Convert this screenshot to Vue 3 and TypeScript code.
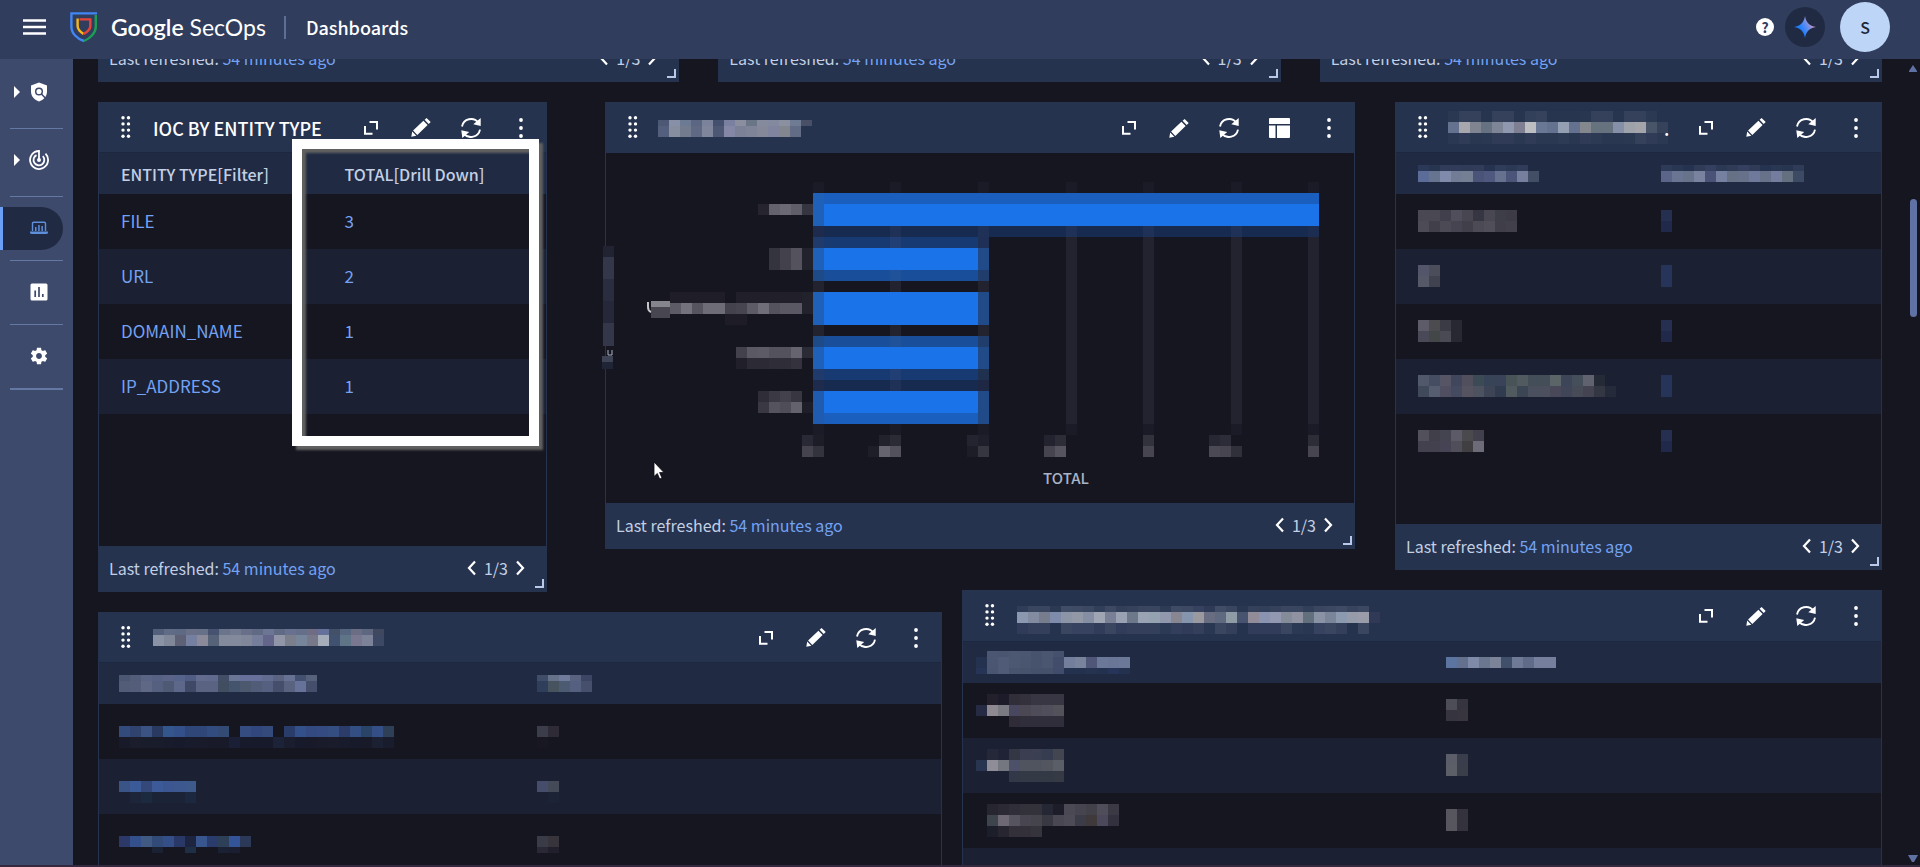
<script setup lang="ts">
import { h } from 'vue'
import type { FunctionalComponent } from 'vue'

type Band = [height: number, colours: string]
type Cell = string | Band[]

interface Column {
  head: Cell
}

interface Card {
  id: string
  label: string
  title: Cell
  trail?: string
  links?: boolean
  first: number
  columns?: Column[]
  rows?: Cell[][]
  chart?: boolean
  pager?: boolean
  spotlight?: boolean
}

const CELL = 11

/* Redacted value: bands of square colour cells, "." leaves a cell empty. */
const Mosaic: FunctionalComponent<{ bands: Band[] }> = ({ bands }) => {
  let y = 0
  let width = 0
  const rects = bands.flatMap(([height, colours]) => {
    const list = colours.split(' ')
    const top = y
    y += height
    width = Math.max(width, list.length * CELL)
    return list.map((colour, i) =>
      colour === '.' ? null : h('rect', { x: i * CELL, y: top, width: CELL, height, fill: '#' + colour }),
    )
  })
  return h('svg', { width, height: y, viewBox: `0 0 ${width} ${y}`, 'shape-rendering': 'crispEdges', 'aria-hidden': 'true' }, rects)
}
Mosaic.props = ['bands']

const valueBlue: Band[] = [[11, '252f50'], [11, '20294a']]

const cards: Card[] = [
  {
    id: 'ioc', label: 'IOC by entity type', title: 'IOC BY ENTITY TYPE', links: true, first: 50, pager: true, spotlight: true,
    columns: [{ head: 'ENTITY TYPE[Filter]' }, { head: 'TOTAL[Drill Down]' }],
    rows: [['FILE', '3'], ['URL', '2'], ['DOMAIN_NAME', '1'], ['IP_ADDRESS', '1']],
  },
  {
    id: 'chart', label: 'Bar chart', first: 50, chart: true, pager: true,
    title: [
      [6, '4c5874 8790a6 6d7a93 5b6782 7a839b 44506d 7a80a0 8a8e9f 6a7586 858b9d 83899e 8a90a0 6f7a93 484f66'],
      [11, '535f7d 878ea0 737c8f 5f6983 7f869b 4c5873 8488a6 7c8198 808498 848898 80849e 82868e 626c86 .'],
    ],
  },
  {
    id: 'third', label: 'Summary table', first: 50, pager: true, trail: '.',
    title: [
      [11, '2b3852 35415b 35415b 28354f 35415b 35415b 28354f 33405a 36425c 28354f 28354f 28354f 29364f 35415b 35415b 28354f 35415b 35415b 2c3953 .'],
      [11, '65728f a9a7ae 7f8490 667182 7d8597 8f98ae 7e7f92 bcbec2 6a7896 65728f 959fb4 65728f 85878f 67727f 67727f 8590a8 9da2ab a3a5aa 485468 364259'],
      [11, '2b3853 303c57 2a3751 2b3852 303c57 303c57 2b3852 303c57 2b3852 2b3852 2e3b55 2a3751 303c57 2d3a54 2a3751 2a3751 2b3852 35415b 303c57 2c3953'],
    ],
    columns: [
      { head: [
        [6, '2b3858 283551 303c59 303c59 2f3b57 303c59 263350 303c59 2c3955 303c59 .'],
        [11, '5c6c98 67748f 808aab 727c95 757f93 4a5478 4f587f 66718f 4b5579 777f9f 414e66'],
      ] },
      { head: [
        [6, '2d3a58 2a3753 263350 2f3b57 354060 2c3955 2f3b57 354060 2f3b57 263350 2a3753 283551 2f3b57'],
        [11, '5b658a 6a7594 66738b 79839f 4a5278 7680a0 667185 67728a 6f799c 67728a 747d9e 646f80 3d4a63'],
      ] },
    ],
    rows: [
      [[
        [11, '4a4953 4a4953 403f4b 4f4e5a 474651 363642 484752 3e3e49 3c3b46'],
        [11, '4d4b55 403f4a 4c4a55 454450 403f4a 4c4b55 504e58 403f49 42414b'],
      ], valueBlue],
      [[[11, '53566a 4b4e5a'], [11, '555866 40434f']], [[22, '26345a']]],
      [[[11, '5d5b68 4b4b50 3b3b45 282833'], [11, '4a4957 434747 4a4a55 282833']], valueBlue],
      [[
        [11, '51586b 454d63 555566 40475c 514f5e 3b4a55 374458 394258 485357 505a5f 434e59 444e59 5b6568 3d4659 454f5b 60626f 252a37 .'],
        [11, '404959 565d70 504f62 444a60 55535f 4c5260 3c4456 303b50 50595e 3c4554 4a505e 4b4f5e 484858 404558 464b57 434351 323743 252a3a'],
      ], [[22, '26345a']]],
      [[[11, '52515b 403f4a 444350 5b5a66 4a4a4e 42404c'], [11, '42414d 42414d 464354 4f4e59 423f42 6d6b77']], valueBlue],
    ],
  },
  {
    id: 'fourth', label: 'Detail table', first: 49.6,
    title: [
      [6, '52607c 606c86 5e6a83 6a7088 667088 465270 6a758c 727a92 686f88 606a84 6c7594 606a84 687190 666f8a 6f6c84 65719a 435068 566680 6a6d84 5d6880 404860'],
      [11, '8a92a6 7f8799 5e6075 757f9f 8a8a9a 566278 838a9c 838a9c 80879a 757f9b 63668a 9096a8 7b7f8c 76859a 77788a a5adbb 415270 607488 7a7890 7c8399 3d4864'],
    ],
    columns: [
      { head: [
        [6, '4b5672 525d79 5a6484 566184 5b6488 56638a 515c84 636c8e 606a8c 414e66 6a7596 66709a 66709a 626c90 5a6480 667194 445070 56617c'],
        [11, '525c76 545e7a 5f6986 556080 4e5974 5d678a 3f4966 5a6482 5a6482 414e62 44546c 4c586e 515c78 556080 454f6c 59637f 67729a 454f6c'],
      ] },
      { head: [[6, '3f4d69 66718a 707b9c 59637f 3c4664'], [11, '2f3e5b 47545f 4c5a72 556080 464f6c']] },
    ],
    rows: [
      [[
        [11, '.'],
        [11, '334a7c 30436f 3b5382 293a60 33568c 33508a 2f4678 2f4678 324c80 334a74 . 344c80 30467c 344a7c . 293c6a 33508a 324a80 344a80 354e82 2c3c68 324e82 2a4468 344f86 2e4058'],
        [11, '181a2a 1b1d2c 191c2b 191c2b 181b2b 171a2a 181b2c 191b2a 181a2a 181a2a 1a1f36 171a2a 171a2a 171a2a 1c2338 1a1d2e 171a2a 181a2a 191b2a 1a1c2c 181b2b 171a2a 181a2a 1b2032 181c2c'],
      ], [[11, '.'], [11, '3c3d4a 2f2b36'], [11, '181722 .']]],
      [[
        [11, '.'],
        [11, '3b5488 3b5a98 34497a 3c5a98 3b5690 3c588f 3e5a8c'],
        [11, '. 1c2539 1c2a40 1b2336 1b2336 1b2336 1c2840'],
      ], [[11, '.'], [11, '454d6a 454a58'], [11, '. 1c2337']]],
      [[
        [6, '.'],
        [11, '2c3868 34508c 405a84 314a78 344f88 2a3868 1c2440 38558e 2a3c6c 2e4058 34549a 2c3858'],
        [6, '. . . 1a2133 . . 1e2e44 . . 1a2133 1a1e30 .'],
      ], [[6, '.'], [11, '393b47 37343c'], [6, '2a2834 211f2c']]],
    ],
  },
  {
    id: 'fifth', label: 'Event table', first: 50,
    title: [
      [6, '303d58 3a4660 3a4660 2c3953 414d66 3f4b64 3c4862 323f59 3d4963 333f59 36425c 3a4660 3a4660 2e3b55 3f4b64 3d4963 364260 2f3b56 414d66 3a4660 2a3751 35415b 323f59 36425c 3a4660 3a4660 323f59 3a4660 3c4862 3f4b64 38445e 3c4862 .'],
      [11, '8b98b0 828b9f 787d8d 7e8baa 8c95a6 9298a6 858ea2 9fa5b2 797f95 9aa1b3 6d788a 99a3b4 95a2b0 9197ac 888791 8495ad 9a999f 686d82 5f6980 8f9ca6 48536f 928b98 8a93b0 9198b0 848b99 9092a1 62707e 8a93a6 7a8599 8c9ab0 959ba9 9a9da9 303a56'],
      [11, '2f3b58 343f5c 343f5c 26334e 3a4560 364260 364260 303c5a 3a4560 303c5a 343f5c 343f5c 343f5c 2d3a55 323e5b 2f3b58 343f5c 2a3752 3a4560 343f5c 26334e 303c5a 303c5a 303c5a 3a4560 2c3954 2a3752 364260 3a4560 343f5c 26334e 3a4560 .'],
    ],
    columns: [
      { head: [
        [6, '. 4b5672 4a5570 4c5772 4b5670 47526c 4a5570 46516e . . . . . .'],
        [11, '24314f 4b5672 505b78 4c5772 4a5570 47526c 4a5570 424d6c 737e9c 79839c 4f5678 6c7898 6a7696 6c7898'],
        [6, '263555 4a5572 505b78 48536e 47526c 45506a 45506a 414c6c 24314e 24314e 263350 24314e 26345a 24314e'],
      ] },
      { head: [
        [11, '5b74a0 64718e 7e8aa8 6b768f 7c849a 41506a 6f7a97 5f6b88 76809e 76809e'],
      ] },
    ],
    rows: [
      [[
        [11, '. 231f2b 1d1b29 312d39 34313c 373642 373642 373642'],
        [11, '262a42 8f8a92 7a7a82 494660 4b4854 4e4c58 504e5a 53525a'],
        [11, '. . . 2f2c38 302e3a 302e3a 302e3a 302e3a'],
      ], [[11, '4d4d57 36343f'], [11, '36343f 38353f']]],
      [[
        [11, '. 242838 1f2335 333645 3a3e50 3a4052 373d50 434651'],
        [11, '283450 8f8d98 747780 4c5068 50545f 50545f 53565f 5a5e66'],
        [11, '. . . 323848 333945 333945 333945 353a44'],
      ], [[11, '5b5d69 3a3d4c'], [11, '5c5e68 3a3d4a']]],
      [[
        [11, '. 272530 2b2933 302e38 33313a 33313a 262734 1d1d29 4b4a54 46454f 424149 504d5a 3b3944'],
        [11, '. 3e444c 6e6874 56545e 484550 45434c 383842 484752 4d4c56 3b3c48 40393c 4b485c 33313e'],
        [11, '. 1c1f2a 262530 33303a 33303a 35333b . . . . . . .'],
      ], [[11, '57565f 34323d'], [11, '57565f 34323d']]],
      [[[11, '.']], [[11, '.']]],
    ],
  },
]

type Rect = [col: number, row: number, w: number, h: number, fill: string]

const gridCols = [0, 7, 15, 23, 30, 38, 45]
const bars: Rect[] = [
  [0, 1, 46, 1, '#1b5fbe'], [0, 2, 46, 2, '#1a73e8'], [0, 4, 46, 1, '#172a50'],
  [0, 5, 15, 1, '#183a72'], [0, 6, 15, 2, '#1a73e8'], [0, 8, 15, 1, '#184e9a'],
  [0, 10, 15, 3, '#1a73e8'],
  [0, 14, 15, 1, '#184e9a'], [0, 15, 15, 2, '#1a73e8'], [0, 17, 15, 1, '#183a72'],
  [0, 18, 15, 1, '#172a50'], [0, 19, 15, 2, '#1a73e8'], [0, 21, 15, 1, '#1b5fbe'],
  [0, 1, 1, 3, '#1f60b8'], [0, 4, 1, 1, '#1e2b4c'], [0, 5, 1, 1, '#203b6b'], [0, 6, 1, 2, '#1f60b8'],
  [0, 8, 1, 1, '#1f4a88'], [0, 10, 1, 3, '#1f60b8'], [0, 14, 1, 1, '#1f4a88'], [0, 15, 1, 2, '#1f60b8'],
  [0, 17, 1, 1, '#203b6b'], [0, 18, 1, 1, '#1e2b4c'], [0, 19, 1, 3, '#1f5cb0'],
  [15, 5, 1, 1, '#202f55'], [15, 6, 1, 2, '#214b88'], [15, 8, 1, 1, '#213d6b'], [15, 10, 1, 3, '#214b88'],
  [15, 14, 1, 1, '#213d6b'], [15, 15, 1, 2, '#214b88'], [15, 17, 1, 1, '#20304f'], [15, 18, 1, 1, '#1e2743'],
  [15, 19, 1, 3, '#214b88'],
  [7, 4, 1, 1, '#1f3156'], [7, 5, 1, 1, '#213f74'], [7, 8, 1, 1, '#20529a'], [7, 14, 1, 1, '#20529a'],
  [7, 17, 1, 1, '#213f74'], [7, 18, 1, 1, '#1f3156'],
  [15, 4, 1, 1, '#1f3156'], [23, 4, 1, 1, '#1f3156'], [30, 4, 1, 1, '#1f3156'], [38, 4, 1, 1, '#1f3156'], [45, 4, 1, 1, '#1d2d52'],
]
const labels: Rect[] = [
  [-5, 2, 1, 1, '#25242f'], [-4, 2, 1, 1, '#64636d'], [-3, 2, 1, 1, '#6b6a74'], [-2, 2, 1, 1, '#5f5e69'], [-1, 2, 1, 1, '#343540'],
  [-4, 6, 1, 2, '#34343f'], [-3, 6, 1, 2, '#42414c'], [-2, 6, 1, 2, '#53525d'], [-1, 6, 1, 2, '#22222d'],
  [-13, 10, 5, 1, '#1e1d28'], [-7, 10, 6, 1, '#201f2a'], [-1, 10, 1, 2, '#22222d'],
  [-13, 11, 1, 1, '#5c5b66'], [-12, 11, 1, 1, '#73727d'], [-11, 11, 1, 1, '#55545f'], [-10, 11, 2, 1, '#6d6c77'],
  [-8, 11, 1, 1, '#43424d'], [-7, 11, 1, 1, '#464550'], [-6, 11, 1, 1, '#5c5b66'], [-5, 11, 1, 1, '#6f6e79'],
  [-4, 11, 1, 1, '#53525d'], [-3, 11, 2, 1, '#595863'], [-8, 12, 2, 1, '#1d1c27'],
  [-7, 15, 1, 1, '#42414c'], [-6, 15, 1, 1, '#5a5964'], [-5, 15, 1, 1, '#5c5b66'], [-4, 15, 2, 1, '#53525d'], [-2, 15, 1, 1, '#66656f'], [-1, 15, 1, 1, '#2b2b36'],
  [-7, 16, 1, 1, '#201f2a'], [-6, 16, 2, 1, '#2b2a35'], [-4, 16, 2, 1, '#2e2d38'], [-2, 16, 1, 1, '#33323d'],
  [-5, 19, 1, 1, '#2e2d38'], [-4, 19, 1, 1, '#3a3944'], [-3, 19, 1, 1, '#42414c'], [-2, 19, 1, 1, '#373641'],
  [-5, 20, 1, 1, '#393843'], [-4, 20, 1, 1, '#54535e'], [-3, 20, 1, 1, '#4e4d58'], [-2, 20, 1, 1, '#64636d'], [-1, 20, 1, 1, '#1e1e29'],
  [-1, 23, 1, 1, '#292935'], [-1, 24, 1, 1, '#44434e'], [0, 23, 1, 1, '#1d1d28'], [0, 24, 1, 1, '#33333e'],
  [5, 24, 1, 1, '#1e1e29'], [6, 23, 1, 1, '#22222d'], [7, 23, 1, 1, '#2b2b36'], [6, 24, 1, 1, '#66656f'], [7, 24, 1, 1, '#52515c'],
  [14, 23, 1, 1, '#242430'], [15, 23, 1, 1, '#1e1f2a'], [14, 24, 1, 1, '#1d1d28'], [15, 24, 1, 1, '#363641'],
  [21, 23, 1, 1, '#22232e'], [22, 23, 1, 1, '#2c2d37'], [21, 24, 1, 1, '#46454f'], [22, 24, 1, 1, '#56555f'],
  [30, 23, 1, 1, '#31323c'], [30, 24, 1, 1, '#474650'],
  [36, 23, 1, 1, '#262732'], [37, 23, 1, 1, '#2b2c37'], [36, 24, 1, 1, '#4b4a54'], [37, 24, 1, 1, '#474650'], [38, 24, 1, 1, '#2f303a'],
  [45, 23, 1, 1, '#2c2d37'], [45, 24, 1, 1, '#474650'],
]

const navItems = [
  { id: 'detect', label: 'Detection', expandable: true },
  { id: 'radar', label: 'Investigation', expandable: true },
  { id: 'dash', label: 'Dashboards', active: true },
  { id: 'reports', label: 'Reports' },
  { id: 'settings', label: 'Settings' },
]
</script>

<template>
  <div class="page">
    <header class="topbar">
      <button class="plain menu" type="button" aria-label="Main menu">
        <svg width="24" height="16" viewBox="0 0 24 16"><path d="M0 1.5h23M0 8h23M0 14.5h23" stroke="#fff" stroke-width="2.4" /></svg>
      </button>
      <a class="brand" href="#" aria-label="Google SecOps home">
        <svg width="28" height="31" viewBox="0 0 28 31" fill="none" stroke-width="2.4">
          <path d="M25.8 3V14.5C25.8 21 20 26.5 14 29" stroke="#1e9e55" />
          <path d="M27 1.4H1.4V14.5C1.4 21.5 7 26.8 14 29" stroke="#4285f4" />
          <path d="M7.6 6.4V14C7.6 17.5 10.5 20 13.6 22" stroke="#f9b51c" />
          <path d="M9.5 7.4H20.3V14.2C20.3 17.6 17 20 13.6 22" stroke="#e5443a" />
        </svg>
        <span class="brand-name"><b>Google</b> SecOps</span>
      </a>
      <h1 class="page-title">Dashboards</h1>
      <div class="tools">
        <button class="help" type="button" aria-label="Help">?</button>
        <button class="spark" type="button" aria-label="Assistant">
          <svg width="22" height="22" viewBox="0 0 22 22">
            <defs><linearGradient id="spark" x1="0" y1=".8" x2="1" y2=".2"><stop offset=".3" stop-color="#1c7dff" /><stop offset=".55" stop-color="#5a8cf2" /><stop offset=".8" stop-color="#c294c4" /></linearGradient></defs>
            <path d="M11 0C12 6.5 15.5 10 22 11C15.500 12 12 15.500 11 22C10 15.500 6.500 12 0 11C6.500 10 10 6.500 11 0Z" fill="url(#spark)" />
          </svg>
        </button>
        <button class="avatar" type="button" aria-label="Account">S</button>
      </div>
    </header>

    <div class="body">
      <nav class="side" aria-label="Main">
        <template v-for="item in navItems" :key="item.id">
          <a href="#" class="nav" :class="{ active: item.active, expandable: item.expandable }" :aria-label="item.label">
            <svg v-if="item.expandable" class="caret" width="6" height="12" viewBox="0 0 6 12"><path d="M0 0L6 6L0 12Z" fill="#fff" /></svg>
            <svg v-if="item.id === 'detect'" width="20" height="20" viewBox="0 0 20 20">
              <path d="M10 .5L18 3.500V9.500C18 14.500 14.500 18 10 19.500C5.500 18 2 14.500 2 9.500V3.500Z" fill="#fff" />
              <circle cx="10" cy="9.500" r="3.300" fill="none" stroke="#3d4a6c" stroke-width="1.500" /><path d="M12.200 11.800L16.500 16.200" stroke="#3d4a6c" stroke-width="1.500" />
            </svg>
            <svg v-else-if="item.id === 'radar'" width="20" height="20" viewBox="0 0 20 20" fill="none" stroke="#fff" stroke-width="1.800">
              <path d="M10 10V1A9 9 0 1 0 16.500 3.700" /><path d="M7.500 5.100A5.400 5.400 0 1 0 13.800 6.200" /><circle cx="10" cy="10" r="2" fill="#fff" stroke="none" />
            </svg>
            <svg v-else-if="item.id === 'dash'" width="18" height="14" viewBox="0 0 18 14">
              <path d="M2.500 10V2.500Q2.500 1.300 3.700 1.300H14.300Q15.500 1.300 15.500 2.500V10" fill="none" stroke="#5f8edb" stroke-width="1.400" />
              <path d="M0 10.500H18V11.500Q18 13 16 13H2Q0 13 0 11.500ZM5 6h1.500v4H5ZM8.200 4h1.500v6H8.200ZM11.400 5h1.500v5h-1.500Z" fill="#5f8edb" />
            </svg>
            <svg v-else-if="item.id === 'reports'" width="18" height="18" viewBox="0 0 18 18">
              <rect x=".5" y=".5" width="17" height="17" rx="1.500" fill="#fff" /><path d="M5.200 7.500V14M9 4V14M12.800 11V14" stroke="#3d4a6c" stroke-width="1.700" />
            </svg>
            <svg v-else width="20" height="20" viewBox="0 0 24 24">
              <path fill="#fff" d="M19.430 12.980c.04-.32.07-.64.07-.98s-.03-.66-.07-.98l2.110-1.650c.19-.15.24-.42.12-.64l-2-3.460c-.12-.22-.39-.3-.61-.22l-2.490 1c-.52-.4-1.080-.73-1.690-.98l-.38-2.650C14.460 2.180 14.250 2 14 2h-4c-.25 0-.46.18-.49.42l-.38 2.650c-.61.25-1.170.59-1.690.98l-2.490-1c-.23-.09-.49 0-.61.22l-2 3.460c-.13.22-.07.49.12.64l2.110 1.650c-.04.32-.07.65-.07.98s.03.66.07.98l-2.110 1.650c-.19.15-.24.42-.12.64l2 3.460c.12.22.39.3.61.22l2.490-1c.52.4 1.080.73 1.690.98l.38 2.650c.03.24.24.42.49.42h4c.25 0 .46-.18.49-.42l.38-2.650c.61-.25 1.170-.59 1.690-.98l2.490 1c.23.09.49 0 .61-.22l2-3.460c.12-.22.07-.49-.12-.64l-2.110-1.650zM12 15.500c-1.930 0-3.500-1.570-3.500-3.500s1.570-3.500 3.500-3.500 3.500 1.570 3.500 3.500-1.570 3.500-3.500 3.500z" />
            </svg>
          </a>
          <hr class="rule" />
        </template>
      </nav>

      <main class="content">
        <div class="strip">
          <footer v-for="n in 3" :key="n" class="foot">
            <span>Last refreshed: <a href="#">54 minutes ago</a></span>
            <span class="pager">
              <button class="plain" type="button" aria-label="Previous page"><svg width="9" height="16" viewBox="0 0 9 16"><path d="M8 1.500L2 8L8 14.500" fill="none" stroke="#fff" stroke-width="2.200" /></svg></button>
              1/3
              <button class="plain" type="button" aria-label="Next page"><svg width="9" height="16" viewBox="0 0 9 16"><path d="M1 1.500L7 8L1 14.500" fill="none" stroke="#fff" stroke-width="2.200" /></svg></button>
            </span>
            <i class="grip"></i>
          </footer>
        </div>

        <div class="board">
          <section v-for="card in cards" :key="card.id" class="card" :class="card.id" :aria-label="card.label">
            <header class="head">
              <svg class="drag" width="10" height="24" viewBox="0 0 10 24" fill="#fff">
                <template v-for="r in 4" :key="r"><circle cx="2" :cy="r * 6.2 - 3.5" r="1.700" /><circle cx="7.500" :cy="r * 6.2 - 3.5" r="1.700" /></template>
              </svg>
              <h2 class="title">
                <template v-if="typeof card.title === 'string'">{{ card.title }}</template>
                <Mosaic v-else :bands="card.title" />
                <span v-if="card.trail" class="trail">{{ card.trail }}</span>
              </h2>
              <div class="actions">
                <button class="plain" type="button" aria-label="Expand"><svg width="14" height="14" viewBox="0 0 14 14" fill="none" stroke="#fff" stroke-width="2"><path d="M5.500 1H13V8.500M1 5V12.700H8.500" /></svg></button>
                <button class="plain" type="button" aria-label="Edit"><svg width="20" height="19" viewBox="0 0 20 19" fill="#fff"><path d="M.3 18.700L1.200 13.600L5.300 17.800ZM2.100 12.600L12.400 2.800L16.600 6.900L6.300 17ZM13.600 1.800L15.600 0L19.700 4L17.700 5.900Z" /></svg></button>
                <button class="plain" type="button" aria-label="Refresh"><svg width="20" height="20" viewBox="0 0 20 20"><path d="M1 8.500A9.200 9.200 0 0 1 17.300 4.600M19 11.600A9.200 9.200 0 0 1 3 15.800" fill="none" stroke="#fff" stroke-width="1.900" /><path d="M19.700 0V8L12.300 6.300ZM.3 12.200L8.200 14L1.300 20Z" fill="#fff" /></svg></button>
                <button v-if="card.chart" class="plain" type="button" aria-label="Layout"><svg width="21" height="20" viewBox="0 0 21 20" fill="#fff"><path d="M0 1Q0 0 1 0H20Q21 0 21 1V6H0ZM0 7.500H6.500V20H1Q0 20 0 19ZM8 7.500H21V19Q21 20 20 20H8Z" /></svg></button>
                <button class="plain" type="button" aria-label="More"><svg width="4" height="20" viewBox="0 0 4 20" fill="#fff"><circle cx="2" cy="2" r="1.900" /><circle cx="2" cy="10" r="1.900" /><circle cx="2" cy="18" r="1.900" /></svg></button>
              </div>
            </header>

            <svg v-if="card.chart" class="plot" viewBox="0 0 748 350" role="img" aria-label="Total per item">
              <g transform="translate(207 29) scale(11)" shape-rendering="crispEdges">
                <template v-for="c in gridCols" :key="c">
                  <rect :x="c" y="0" width="1" height="23" fill="#1b1b27" />
                  <rect :x="c" y="5" width="1" height="17" fill="#22232f" />
                </template>
                <rect v-for="(r, i) in bars" :key="'b' + i" :x="r[0]" :y="r[1]" :width="r[2]" :height="r[3]" :fill="r[4]" />
                <rect v-for="(r, i) in labels" :key="'l' + i" :x="r[0]" :y="r[1]" :width="r[2]" :height="r[3]" :fill="r[4]" />
              </g>
              <g shape-rendering="crispEdges">
                <path d="M45 148H64V154H45Z" fill="#85858e" /><path d="M45 154H64V165H45Z" fill="#474651" />
                <path d="M-3 93H8V104H-3Z" fill="#212332" /><path d="M-3 104H8V126H-3Z" fill="#34374a" /><path d="M-3 126H8V148H-3Z" fill="#2a2d3f" />
                <path d="M-3 148H8V170H-3Z" fill="#26283a" /><path d="M-3 170H8V193H-3Z" fill="#34374a" /><path d="M-4 203H7V209H-4Z" fill="#3f4356" /><path d="M-4 209H7V216H-4Z" fill="#202535" />
              </g>
              <path d="M42 149V154Q42 158 45 159" fill="none" stroke="#c4c4ca" stroke-width="2" />
              <path d="M2 197V202H6V197" fill="none" stroke="#a9b0c4" stroke-width="1" />
              <text x="460" y="331" class="axis">TOTAL</text>
            </svg>

            <table v-else class="grid" :class="{ links: card.links }">
              <colgroup><col :style="{ width: card.first + '%' }" /><col /></colgroup>
              <thead>
                <tr>
                  <th v-for="(col, i) in card.columns" :key="i" scope="col">
                    <template v-if="typeof col.head === 'string'">{{ col.head }}</template>
                    <Mosaic v-else :bands="col.head" />
                  </th>
                </tr>
              </thead>
              <tbody>
                <tr v-for="(row, i) in card.rows" :key="i">
                  <td v-for="(cell, j) in row" :key="j">
                    <a v-if="typeof cell === 'string'" href="#">{{ cell }}</a>
                    <Mosaic v-else :bands="cell" />
                  </td>
                </tr>
              </tbody>
            </table>

            <footer v-if="card.pager" class="foot">
              <span>Last refreshed: <a href="#">54 minutes ago</a></span>
              <span class="pager">
                <button class="plain" type="button" aria-label="Previous page"><svg width="9" height="16" viewBox="0 0 9 16"><path d="M8 1.500L2 8L8 14.500" fill="none" stroke="#fff" stroke-width="2.200" /></svg></button>
                1/3
                <button class="plain" type="button" aria-label="Next page"><svg width="9" height="16" viewBox="0 0 9 16"><path d="M1 1.500L7 8L1 14.500" fill="none" stroke="#fff" stroke-width="2.200" /></svg></button>
              </span>
              <i class="grip"></i>
            </footer>
            <div v-if="card.spotlight" class="spotlight"></div>
          </section>
        </div>
      </main>

      <div class="scroll" aria-hidden="true">
        <svg width="8" height="7" viewBox="0 0 8 7"><path d="M4 0L8 6V7H0V6Z" fill="#6072a4" /></svg>
        <span class="thumb"></span>
        <svg width="10" height="7" viewBox="0 0 10 7"><path d="M0 0H10L6 7H4Z" fill="#6072a4" /></svg>
      </div>
    </div>

    <svg class="cursor" width="12" height="19" viewBox="0 0 12 19" aria-hidden="true">
      <path d="M1 1V15.500L4.300 12.500L6.700 18L9 17L6.600 11.600H11Z" fill="#fff" stroke="#08080e" stroke-width=".8" />
    </svg>
  </div>
</template>

<style>
html,
body {
  background: #161621;
}
</style>

<style scoped>
.page {
  position: relative;
  display: flex;
  flex-direction: column;
  height: 100vh;
  box-sizing: border-box;
  border-bottom: 2px solid #35293f;
  overflow: hidden;
  background: #161621;
  color: #c3cfe4;
  font: 16px/24px "Noto Sans CJK SC", "Noto Sans", sans-serif;
}
.page a {
  color: #74a2f2;
  text-decoration: none;
}
.plain {
  display: inline-flex;
  align-items: center;
  justify-content: center;
  padding: 0;
  border: 0;
  background: none;
}
svg {
  display: block;
  flex: none;
}
.topbar {
  z-index: 1;
  display: flex;
  align-items: center;
  flex: none;
  height: 59px;
  box-sizing: border-box;
  padding: 0 30px 5px 23px;
  background: #313d5c;
}
.brand {
  display: flex;
  align-items: center;
  gap: 13px;
  margin-left: 23px;
}
.page .brand-name {
  color: #fff;
  font: 400 23px/32px Lato, sans-serif;
}
.brand-name b {
  font-weight: 600;
}
.page-title {
  margin: 0 0 0 18px;
  padding-left: 20px;
  border-left: 2px solid #5d6f98;
  color: #fff;
  font-size: 18px;
  font-weight: 500;
  line-height: 23px;
}
.tools {
  display: flex;
  align-items: center;
  margin-left: auto;
}
.tools button {
  display: flex;
  align-items: center;
  justify-content: center;
  padding: 0;
  border: 0;
  border-radius: 50%;
  font-family: inherit;
}
.help {
  width: 18px;
  height: 18px;
  background: #fff;
  color: #313d5c;
  font-size: 14px;
  font-weight: 700;
  line-height: 18px;
}
.spark {
  width: 40px;
  height: 40px;
  margin: 0 15px 0 11px;
  background: #202b43;
}
.avatar {
  width: 50px;
  height: 50px;
  background: #bdd5f7;
  color: #1d2536;
  font-size: 16px;
  font-weight: 500;
}
.body {
  display: grid;
  grid-template-columns: 73px minmax(0, 1fr) 14px;
  flex: 1;
  min-height: 0;
}
.side {
  padding-top: 12px;
  background: #3d4a6c;
}
.nav {
  display: flex;
  align-items: center;
  justify-content: center;
  position: relative;
  height: 43px;
  margin: 0 10px 10px 0;
  padding: 0 0 2px 15px;
  box-sizing: border-box;
}
.nav.expandable {
  margin-bottom: 14px;
}
.nav.active {
  padding-left: 12px;
  border-left: 3px solid #6b9ff5;
  border-radius: 0 22px 22px 0;
  background: #202b43;
}
.caret {
  position: absolute;
  left: 14px;
}
.rule {
  height: 1px;
  margin: 0 10px 10px;
  border: 0;
  background: #6378a2;
}
.rule:last-child {
  height: 2px;
}
.content {
  display: flex;
  flex-direction: column;
  min-height: 0;
  padding: 0 24px 0 25px;
  overflow: hidden;
}
.strip {
  display: grid;
  grid-template-columns: 581fr 562fr 562fr;
  gap: 39px;
  align-content: end;
  flex: none;
  height: 23px;
  margin-bottom: 20px;
}
.board {
  display: grid;
  grid-template-columns: 449fr 58fr 337fr 20fr 393fr 40fr 487fr;
  grid-template-rows: 447px 21px 20px 2px 20px minmax(0, 1fr);
  flex: 1;
  min-height: 0;
}
.card {
  position: relative;
  display: flex;
  flex-direction: column;
  min-width: 0;
  min-height: 0;
  box-sizing: border-box;
  border: 1px solid #25334f;
  border-bottom: 0;
}
.ioc {
  grid-area: 1 / 1 / 5 / 2;
}
.chart {
  grid-area: 1 / 3 / 2 / 6;
}
.third {
  grid-area: 1 / 7 / 3 / 8;
}
.fourth {
  grid-area: 6 / 1 / 7 / 4;
  overflow: hidden;
}
.fifth {
  grid-area: 4 / 5 / 7 / 8;
  overflow: hidden;
}
.head {
  display: flex;
  align-items: center;
  flex: none;
  height: 49px;
  padding: 0 23px 0 22px;
  background: #25334f;
}
.chart .head,
.fifth .head {
  height: 50px;
}
.drag {
  margin-bottom: 2px;
}
.title {
  display: flex;
  align-items: center;
  margin: 0;
  padding-left: 22px;
  color: #fff;
  font-size: 18px;
  font-weight: 500;
  line-height: 24px;
  white-space: nowrap;
}
.chart .title,
.third .title {
  padding-left: 20px;
}
.fifth .title {
  padding-top: 8px;
}
.trail {
  margin-left: -4px;
}
.actions {
  display: flex;
  gap: 30px;
  margin-left: auto;
}
.actions .plain {
  width: 20px;
  height: 20px;
}
.actions .plain:last-child {
  width: 4px;
  margin-left: 8px;
}
.grid {
  width: 100%;
  table-layout: fixed;
  border-spacing: 0;
}
.grid th,
.grid td {
  height: 55px;
  box-sizing: border-box;
  padding: 0 0 0 22px;
  text-align: left;
  white-space: nowrap;
}
.grid td {
  padding-bottom: 1px;
  font-size: 17px;
}
.grid th {
  height: 42px;
  border-top: 1px solid #1c2740;
  background: #202b43;
  font-weight: 500;
}
.fourth .grid th,
.fourth .grid td {
  padding-left: 20px;
}
.fifth .grid th,
.fifth .grid td {
  padding-left: 24px;
}
.fifth .grid th:first-child,
.fifth .grid td:first-child {
  padding-left: 13px;
}
.grid tbody tr:nth-child(even) {
  background: #1b2033;
}
.plot {
  width: 100%;
  overflow: visible;
}
.axis {
  fill: #a9b3c6;
  font: 500 15px "Noto Sans CJK SC", sans-serif;
  text-anchor: middle;
}
.foot {
  position: relative;
  display: flex;
  align-items: center;
  justify-content: space-between;
  flex: none;
  height: 46px;
  margin: auto -1px 0;
  padding: 0 22px 2px 11px;
  box-sizing: border-box;
  background: #25334f;
  white-space: nowrap;
}
.strip .foot {
  margin: 0;
}
.pager {
  display: flex;
  align-items: center;
  gap: 8px;
}
.grip {
  position: absolute;
  right: 3px;
  bottom: 4px;
  width: 7px;
  height: 7px;
  border: solid #b9c9ea;
  border-width: 0 2px 2px 0;
}
.spotlight {
  position: absolute;
  top: 36px;
  right: 7px;
  width: 247px;
  height: 307px;
  box-sizing: border-box;
  border: 10px solid #fff;
  filter: drop-shadow(4px 4px 1px #606060);
}
.scroll {
  display: flex;
  flex-direction: column;
  align-items: center;
  justify-content: space-between;
  padding: 6px 0 3px;
}
.thumb {
  width: 7px;
  height: 118px;
  margin: 127px 0 auto;
  border-radius: 4px;
  background: #6072a4;
}
.cursor {
  position: absolute;
  left: 653px;
  top: 461px;
}
</style>
